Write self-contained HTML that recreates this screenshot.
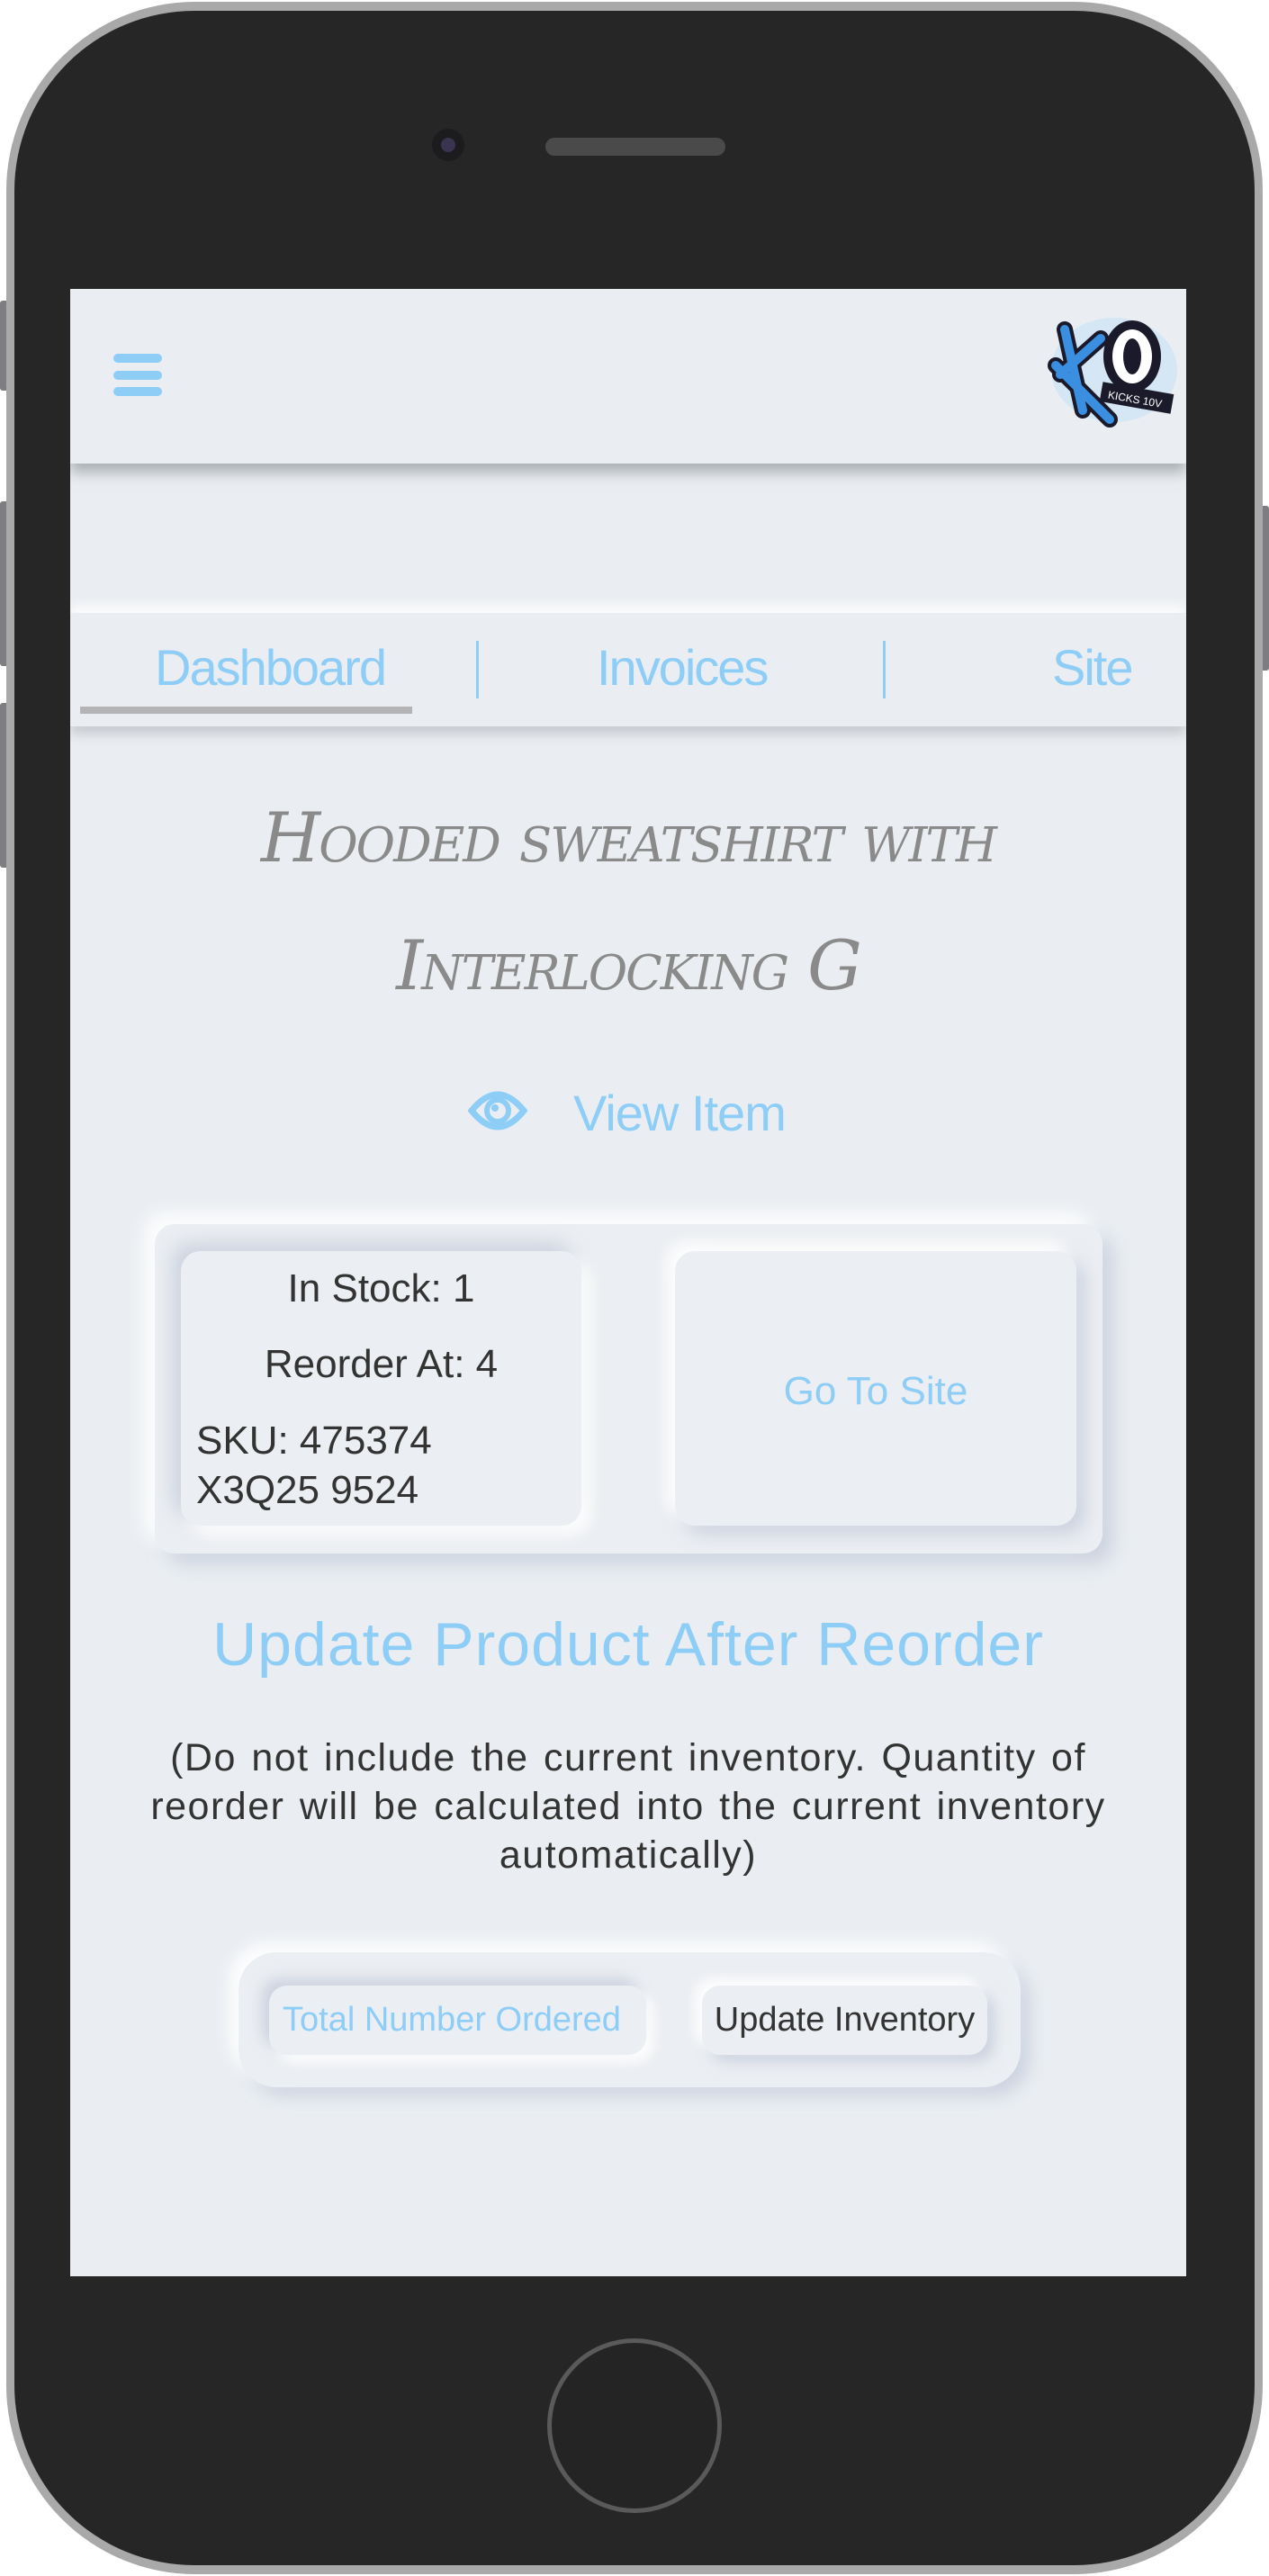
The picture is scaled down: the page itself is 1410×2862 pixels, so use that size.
<!DOCTYPE html>
<html><head><meta charset="utf-8">
<style>
*{margin:0;padding:0;box-sizing:border-box}
body{width:1410px;height:2862px;background:#fff;position:relative;overflow:hidden;font-family:"Liberation Sans",sans-serif}
.abs{position:absolute}
.phone{left:7px;top:2px;width:1396px;height:2858px;border-radius:210px;background:#a9a9a9}
.bez{left:16px;top:12px;width:1378px;height:2838px;border-radius:200px;background:#262626}
.btn{background:#7d7d82;border-radius:3px}
.screen{left:78px;top:321px;width:1240px;height:2208px;background:#eaeef2;overflow:hidden}
.t{position:absolute;white-space:nowrap}
.blue{color:#8dcdf6}
</style></head><body>
<div class="abs btn" style="left:0;top:334px;width:10px;height:100px"></div>
<div class="abs btn" style="left:0;top:557px;width:10px;height:183px"></div>
<div class="abs btn" style="left:0;top:781px;width:10px;height:183px"></div>
<div class="abs btn" style="left:1400px;top:562px;width:10px;height:183px"></div>
<div class="abs phone"></div>
<div class="abs bez"></div>
<div class="abs" style="left:480px;top:143px;width:36px;height:36px;border-radius:50%;background:#1c1c1f"></div>
<div class="abs" style="left:490px;top:153px;width:16px;height:16px;border-radius:50%;background:#3a3450"></div>
<div class="abs" style="left:606px;top:153px;width:200px;height:20px;border-radius:10px;background:#4a4a4a"></div>
<div class="abs" style="left:608px;top:2598px;width:194px;height:194px;border-radius:50%;border:5px solid #5a5a5a;background:#242424"></div>

<div class="abs screen">
  <div class="abs" style="left:0;top:0;width:1240px;height:194px;background:#eaeef2;box-shadow:0 10px 14px rgba(120,125,130,.55)"></div>
  <div class="abs" style="left:48px;top:72px;width:54px;height:10px;border-radius:5px;background:#8dcdf6"></div>
  <div class="abs" style="left:48px;top:91px;width:54px;height:10px;border-radius:5px;background:#8dcdf6"></div>
  <div class="abs" style="left:48px;top:109px;width:54px;height:10px;border-radius:5px;background:#8dcdf6"></div>
  <svg class="abs" style="left:1085px;top:25px" width="150" height="135" viewBox="0 0 150 135">
    <ellipse cx="75" cy="65" rx="70" ry="58" fill="#bfe0f6" opacity=".5"/>
    <path d="M20 20 L40 110 M10 60 L70 120 M15 70 L60 30" stroke="#1a1a2a" stroke-width="18" stroke-linecap="round"/>
    <path d="M20 20 L40 110 M10 60 L70 120 M15 70 L60 30" stroke="#3b8fe0" stroke-width="10" stroke-linecap="round"/>
    <ellipse cx="95" cy="50" rx="32" ry="40" fill="#1a1a2a"/>
    <ellipse cx="95" cy="50" rx="22" ry="30" fill="#fff"/>
    <ellipse cx="95" cy="50" rx="10" ry="20" fill="#1a1a2a"/>
    <rect x="60" y="85" width="80" height="22" fill="#1a1a2a" transform="rotate(10 100 96)"/>
    <text x="68" y="102" font-size="12" fill="#fff" font-family="Liberation Sans" transform="rotate(10 100 96)">KICKS 10V</text>
  </svg>
  <div class="abs" style="left:0;top:360px;width:1240px;height:126px;background:#eaeef2;box-shadow:0 -8px 12px rgba(255,255,255,.9),0 8px 12px rgba(150,155,160,.45)"></div>
  <div class="t blue" style="left:94px;top:388px;font-size:56px;letter-spacing:-2px">Dashboard</div>
  <div class="abs" style="left:11px;top:464px;width:369px;height:8px;background:#b4b4b6"></div>
  <div class="abs" style="left:451px;top:391px;width:3px;height:64px;background:#8dcdf6"></div>
  <div class="t blue" style="left:585px;top:388px;font-size:56px;letter-spacing:-2px">Invoices</div>
  <div class="abs" style="left:903px;top:391px;width:3px;height:64px;background:#8dcdf6"></div>
  <div class="t blue" style="left:1091px;top:388px;font-size:56px;letter-spacing:-2px">Site</div>
  <div class="t" style="left:0;width:1240px;text-align:center;top:565px;font-size:76px;color:#8a8a8a;font-variant:small-caps;font-family:'DejaVu Serif',serif;font-style:italic;letter-spacing:-2px">Hooded sweatshirt with</div>
  <div class="t" style="left:0;width:1240px;text-align:center;top:707px;font-size:76px;color:#8a8a8a;font-variant:small-caps;font-family:'DejaVu Serif',serif;font-style:italic;letter-spacing:-2px">Interlocking G</div>
  <svg class="abs" style="left:442px;top:883px" width="66" height="60" viewBox="0 0 66 60">
    <path d="M4 30 Q33 -6 62 30 Q33 66 4 30 Z" fill="none" stroke="#8dcdf6" stroke-width="7"/>
    <circle cx="33" cy="30" r="12" fill="none" stroke="#8dcdf6" stroke-width="6"/>
    <circle cx="30" cy="27" r="4" fill="#8dcdf6"/>
  </svg>
  <div class="t blue" style="left:559px;top:883px;font-size:56px;letter-spacing:-1px">View Item</div>
  <div class="abs" style="left:94px;top:1039px;width:1053px;height:366px;border-radius:22px;background:#ebeef2;box-shadow:-12px -12px 20px rgba(255,255,255,.9),12px 12px 20px rgba(180,190,210,.55)"></div>
  <div class="abs" style="left:123px;top:1069px;width:445px;height:305px;border-radius:22px;background:#ebeef2;box-shadow:-10px -10px 18px rgba(180,190,210,.5),10px 10px 18px rgba(255,255,255,.95)"></div>
  <div class="t" style="left:123px;width:445px;text-align:center;top:1086px;font-size:44px;color:#333">In Stock: 1</div>
  <div class="t" style="left:123px;width:445px;text-align:center;top:1170px;font-size:44px;color:#333">Reorder At: 4</div>
  <div class="t" style="left:140px;top:1252px;font-size:44px;color:#333;line-height:55px">SKU: 475374<br>X3Q25 9524</div>
  <div class="abs" style="left:672px;top:1069px;width:446px;height:305px;border-radius:22px;background:#ebeef2;box-shadow:-10px -10px 18px rgba(255,255,255,.95),10px 10px 18px rgba(180,190,210,.55)"></div>
  <div class="t blue" style="left:672px;width:446px;text-align:center;top:1200px;font-size:44px">Go To Site</div>
  <div class="t blue" style="left:0;width:1240px;text-align:center;top:1467px;font-size:68px;letter-spacing:1px">Update Product After Reorder</div>
  <div class="abs" style="left:75px;width:1090px;text-align:center;top:1605px;font-size:43px;color:#333;line-height:54px;letter-spacing:1.5px;word-spacing:3px">(Do not include the current inventory. Quantity of reorder will be calculated into the current inventory automatically)</div>
  <div class="abs" style="left:187px;top:1848px;width:869px;height:150px;border-radius:42px;background:#ebeef2;box-shadow:-10px -10px 18px rgba(255,255,255,.95),10px 10px 18px rgba(180,190,210,.55)"></div>
  <div class="abs" style="left:221px;top:1885px;width:419px;height:77px;border-radius:20px;background:#ebeef2;box-shadow:-8px -8px 14px rgba(180,190,210,.55),8px 8px 14px rgba(255,255,255,.95)"></div>
  <div class="t blue" style="left:236px;top:1902px;font-size:38px">Total Number Ordered</div>
  <div class="abs" style="left:702px;top:1885px;width:317px;height:77px;border-radius:20px;background:#ebeef2;box-shadow:-8px -8px 14px rgba(255,255,255,.95),8px 8px 14px rgba(180,190,210,.55)"></div>
  <div class="t" style="left:702px;width:317px;text-align:center;top:1902px;font-size:38px;color:#333">Update Inventory</div>
</div>
</body></html>
